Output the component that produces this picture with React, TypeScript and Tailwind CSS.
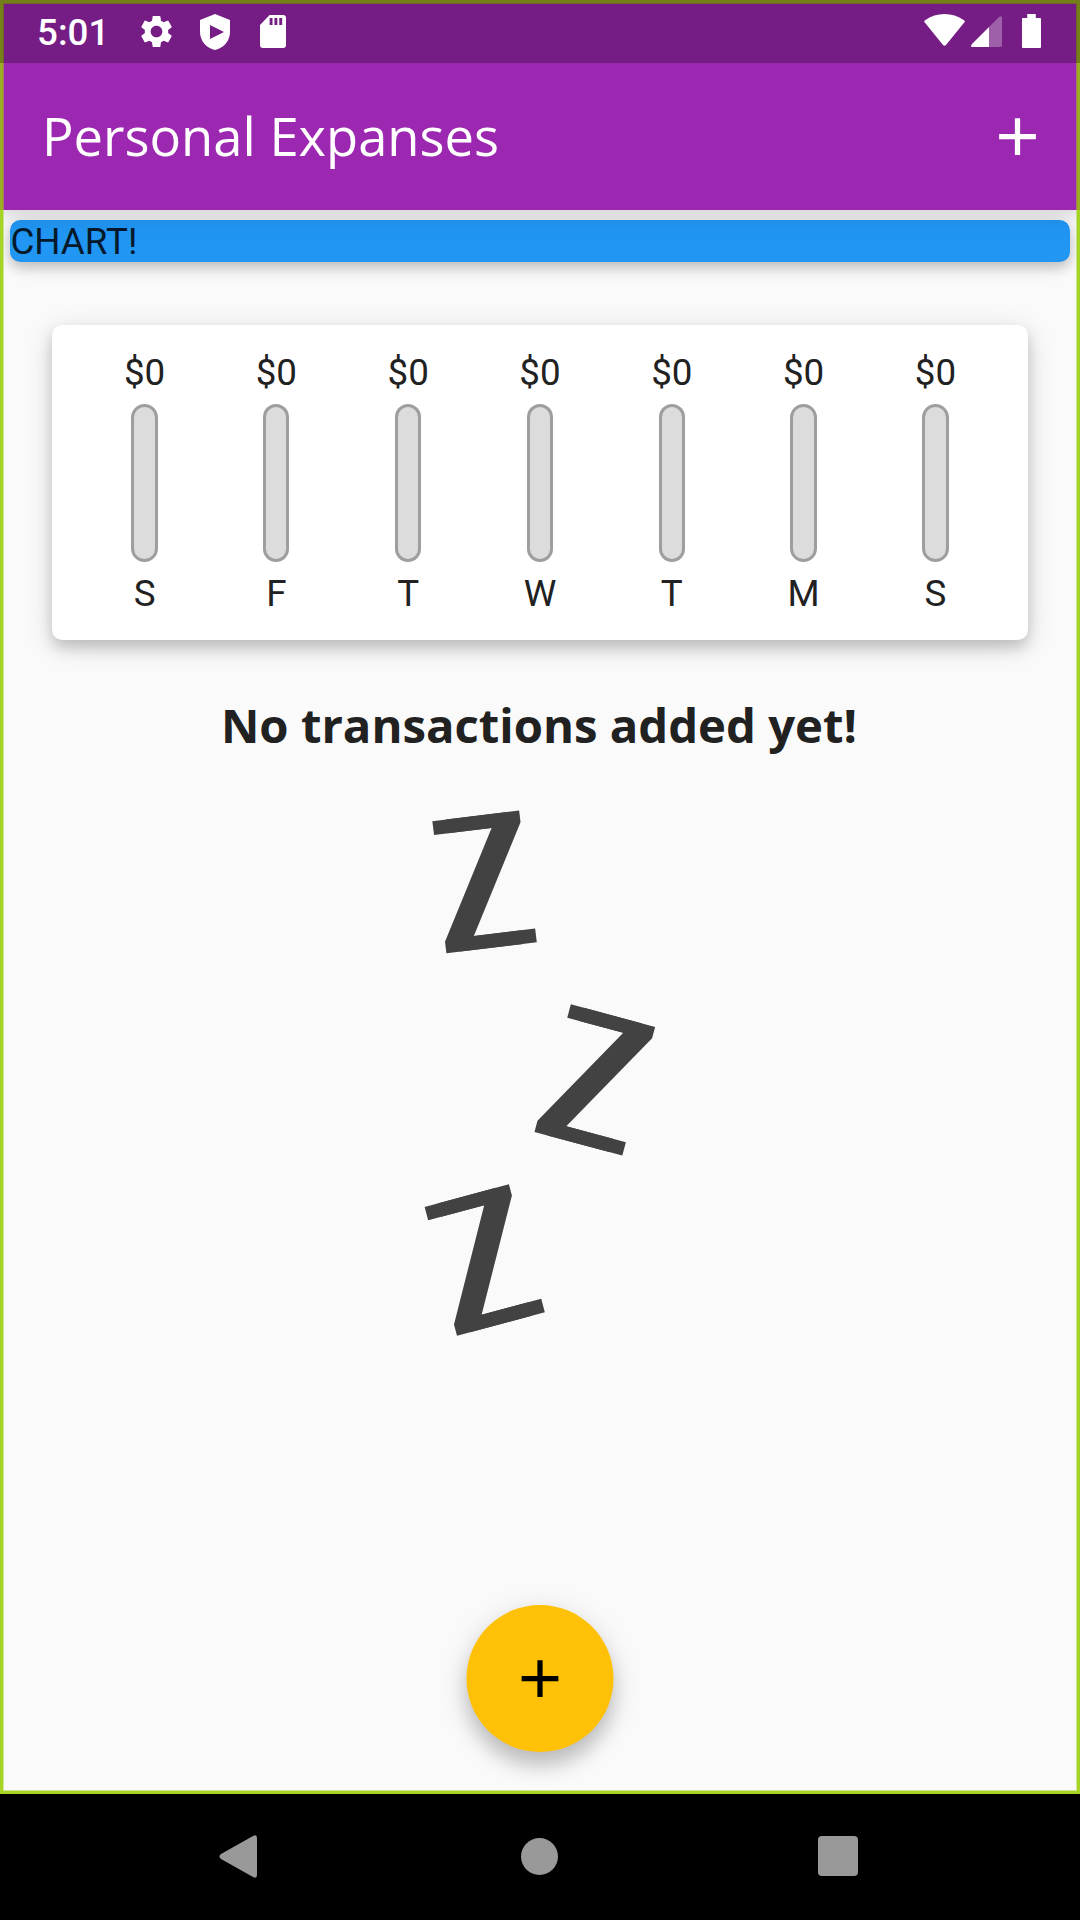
import { MdAdd, MdSettings } from "react-icons/md";

const days = ["S", "F", "T", "W", "T", "M", "S"];

function StatusBar() {
  return (
    <div className="relative z-20 flex h-[63px] shrink-0 items-center bg-[#751d84] text-white">
      <span className="mt-[3px] ml-[37px] w-[94px] font-['Roboto',sans-serif] text-[36.75px] leading-[42px] font-medium">
        5:01
      </span>
      <MdSettings className="ml-[6px] size-[39px]" />
      <svg className="ml-[24px] h-[36px] w-[30px]" viewBox="0 0 30 36">
        <path
          fill="currentColor"
          fillRule="evenodd"
          d="M15 0 30 6V18C30 26.500 24 34 15 36C6 34 0 26.500 0 18V6ZM10 11V25L24 18Z"
        />
      </svg>
      <svg className="ml-[30px] h-[33px] w-[26px]" viewBox="0 0 27 33" preserveAspectRatio="none">
        <path
          fill="currentColor"
          fillRule="evenodd"
          d="M10 0H24Q27 0 27 3V30Q27 33 24 33H3Q0 33 0 30V10ZM10 3V10H13V3ZM15 3V10H18V3ZM20 3V10H23V3Z"
        />
      </svg>
      <div className="mr-[39px] ml-auto flex items-start pb-px">
        <svg className="h-[32px] w-[41px]" viewBox="0 0 41 33" preserveAspectRatio="none">
          <path fill="currentColor" d="M1 9Q-.5 7.500 1 6.500Q10 0 20.500 0T40 6.500Q41.500 7.500 40 9L22 32Q20.500 33.500 19 32Z" />
        </svg>
        <svg className="mt-[2px] ml-[6px] h-[31px] w-[31px]" viewBox="0 0 31 31">
          <path fill="currentColor" opacity=".3" d="M18 11 28 1Q31-1 31 2V29Q31 31 29 31H18Z" />
          <path fill="currentColor" d="M18 11V31H1Q-1 31 1 28Z" />
        </svg>
        <svg className="ml-[20px] h-[34px] w-[19px]" viewBox="0 0 20 34" preserveAspectRatio="none">
          <path fill="currentColor" d="M5.500 0H14.500V4H19Q20 4 20 5V33Q20 34 19 34H1Q0 34 0 33V5Q0 4 1 4H5.500Z" />
        </svg>
      </div>
    </div>
  );
}

function Bar({ day }: { day: string }) {
  return (
    <div className="flex flex-1 flex-col items-center">
      <span className="h-[42px] leading-[42px]">$0</span>
      <div className="mt-[10.500px] h-[157.500px] w-[26.25px] rounded-full border-[3px] border-[#9e9e9e] bg-[#dcdcdc]" />
      <span className="mt-[11px] leading-[42px]">{day}</span>
    </div>
  );
}

function Zzz() {
  const letter =
    "absolute flex h-[133px] w-[88px] items-center justify-center font-['Open_Sans',sans-serif] text-[186px] leading-none text-[#424242] [text-shadow:16px_0_0_#424242]";
  return (
    <div className="relative mx-auto mt-[31px] h-[525px] w-[300px]">
      <span className={`${letter} top-[27.5px] left-[50px] [transform:rotate(-6.95deg)_scaleX(.84)_translate(-8.5px,-5.8px)]`}>
        Z
      </span>
      <span className={`${letter} top-[225px] left-[162px] [transform:rotate(15deg)_scaleX(.84)_translate(-8.5px,-5.8px)]`}>
        Z
      </span>
      <span className={`${letter} top-[405.5px] left-[50px] [transform:rotate(-15deg)_scaleX(.84)_translate(-8.5px,-5.8px)]`}>
        Z
      </span>
    </div>
  );
}

export default function App() {
  return (
    <div className="flex h-[1920px] w-[1080px] flex-col overflow-hidden bg-black">
      <div className="relative flex h-[1794px] flex-col bg-[#fafafa] font-['Roboto',sans-serif] text-[36.75px] text-[#212121]">
        <StatusBar />
        <header className="relative z-10 flex h-[147px] shrink-0 items-center justify-between bg-[#9c27b0] pr-[31.5px] pl-[42px] text-white shadow-[0_5px_14px_rgba(0,0,0,.1),0_8px_30px_rgba(0,0,0,.06)]">
          <h1 className="font-['Open_Sans',sans-serif] text-[52.5px]">Personal Expanses</h1>
          <MdAdd className="size-[63px]" />
        </header>

        <div className="mx-[10.4px] mt-[10.4px] h-[42px] shrink-0 rounded-[10.5px] bg-[#2196f3] pt-px leading-[42px] text-[#061a2b] shadow-[0_6px_12px_rgba(0,0,0,.18),0_3px_22px_rgba(0,0,0,.1)]">
          CHART!
        </div>

        <section className="mx-[52.4px] mt-[63px] flex h-[315px] shrink-0 rounded-[10.5px] bg-white px-[26.25px] pt-[26.25px] shadow-[0_8px_14px_rgba(0,0,0,.17),0_6px_30px_rgba(0,0,0,.13)]">
          {days.map((day, i) => (
            <Bar key={i} day={day} />
          ))}
        </section>

        <h2 className="mt-[52.6px] mr-[2px] text-center font-['Open_Sans',sans-serif] text-[47.25px] leading-[64px] font-bold">
          No transactions added yet!
        </h2>
        <Zzz />

        <button className="mx-auto mt-auto mb-[42px] flex size-[147px] shrink-0 -translate-x-[0.5px] items-center justify-center rounded-full bg-[#ffc107] text-black shadow-[0_14px_18px_rgba(0,0,0,.17),0_7px_32px_rgba(0,0,0,.13)]">
          <MdAdd className="size-[63px]" />
        </button>

        <div className="pointer-events-none absolute inset-0 z-30 border-[3px] border-[#a5d424]">
          <div className="size-full border border-[#a5d424]/50" />
        </div>
        <div className="pointer-events-none absolute inset-x-0 top-0 z-30 h-[63px] border-x-[3px] border-t-[3px] border-[#73801a]">
          <div className="size-full border-x border-t border-[#73602a]" />
        </div>
        <div className="pointer-events-none absolute inset-x-0 top-[63px] z-30 h-[147px] border-x-[3px] border-[#9bad22]" />
      </div>

      <nav className="flex h-[126px] items-center text-[#999]">
        <svg className="mb-[2px] ml-[219px] h-[43px] w-[38px]" viewBox="0 0 38 43">
          <path fill="currentColor" d="M34 1Q38-1 38 3V40Q38 44 34 42L2 24Q-1 21.500 2 19Z" />
        </svg>
        <div className="mb-[2px] ml-[264px] size-[37px] rounded-full bg-current" />
        <div className="mb-[2px] ml-[260px] size-[40px] rounded-[4px] bg-current" />
      </nav>
    </div>
  );
}
